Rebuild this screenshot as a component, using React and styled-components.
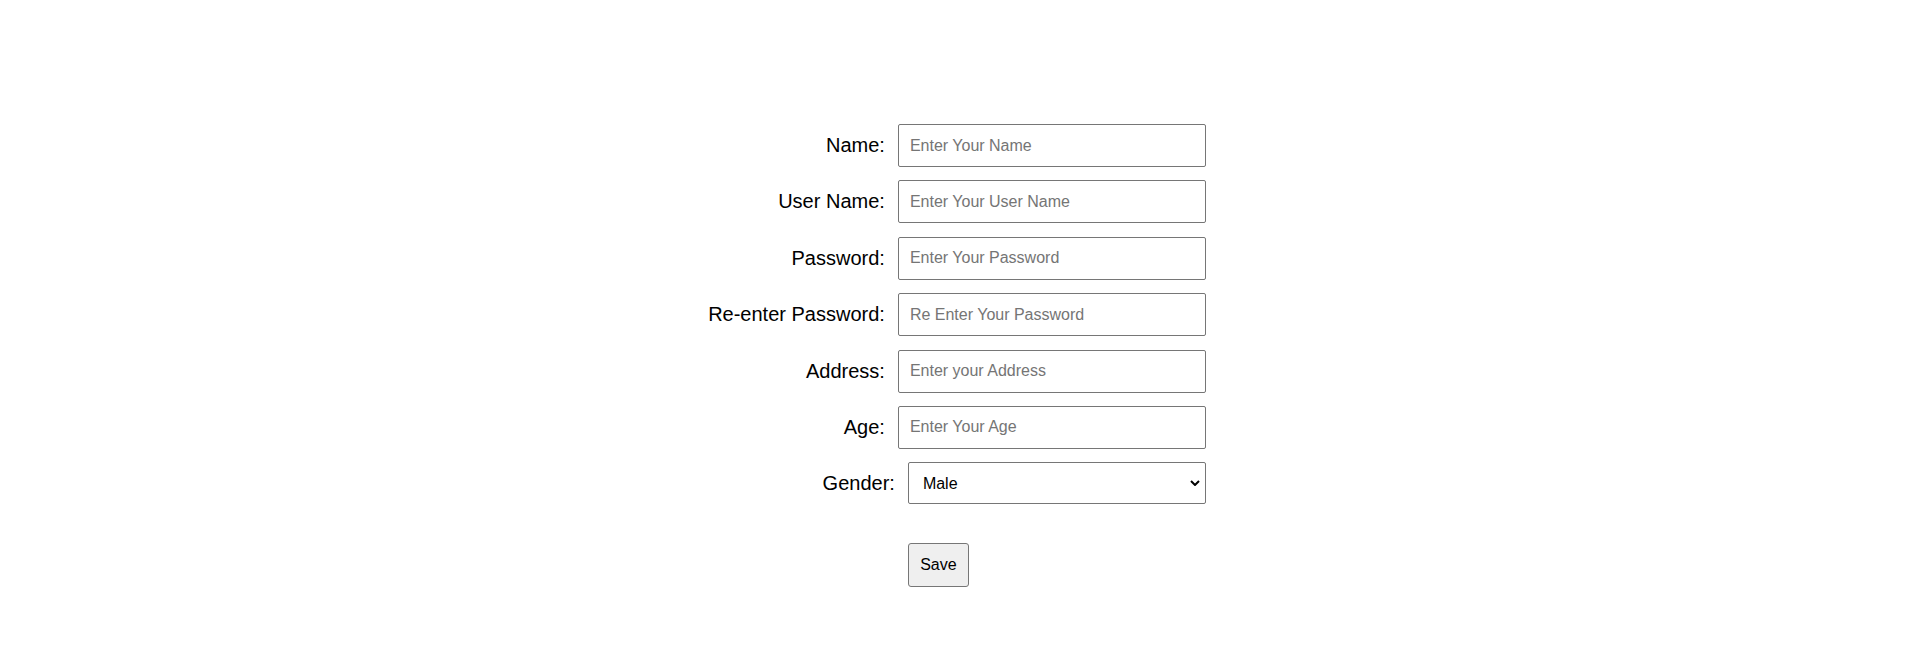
import React, { useState } from "react";
import styled, { createGlobalStyle } from "styled-components";

const GlobalStyle = createGlobalStyle`
    body {
        margin: 0;
        background: #ffffff;
        font-family: "Liberation Sans", Arial, sans-serif;
    }
`;

const fields = [
    { label: "Name:", name: "name", type: "text", placeholder: "Enter Your Name" },
    { label: "User Name:", name: "username", type: "text", placeholder: "Enter Your User Name" },
    { label: "Password:", name: "password", type: "password", placeholder: "Enter Your Password" },
    { label: "Re-enter Password:", name: "repassword", type: "password", placeholder: "Re Enter Your Password" },
    { label: "Address:", name: "address", type: "text", placeholder: "Enter your Address" },
    { label: "Age:", name: "age", type: "text", placeholder: "Enter Your Age" },
];

export default function App() {
    const [form, setForm] = useState({ gender: "Male" });

    const handleChange = (e) => {
        setForm({ ...form, [e.target.name]: e.target.value });
    };

    return (
        <>
            <GlobalStyle />
            <Page>
                <Form onSubmit={(e) => e.preventDefault()}>
                    {fields.map((f) => (
                        <React.Fragment key={f.name}>
                            <Label htmlFor={f.name}>{f.label}</Label>
                            <Input
                                id={f.name}
                                name={f.name}
                                type={f.type}
                                placeholder={f.placeholder}
                                value={form[f.name] || ""}
                                onChange={handleChange}
                            />
                        </React.Fragment>
                    ))}
                    <Label htmlFor="gender" $shift>Gender:</Label>
                    <SelectWrap>
                        <Select id="gender" name="gender" value={form.gender} onChange={handleChange}>
                            <option>Male</option>
                            <option>Female</option>
                            <option>Other</option>
                        </Select>
                        <Chevron width="10" height="6" viewBox="0 0 10 6">
                            <polyline points="1,1 5,5 9,1" fill="none" stroke="#000" strokeWidth="2" />
                        </Chevron>
                    </SelectWrap>
                    <span />
                    <SaveButton type="submit">Save</SaveButton>
                </Form>
            </Page>
        </>
    );
}

const Page = styled.div`
    display: flex;
    justify-content: center;
    align-items: flex-start;
    padding: 124px 1px 0 0;
    min-height: 661px;
    box-sizing: border-box;
`;

const Form = styled.form`
    display: grid;
    grid-template-columns: auto 308px;
    column-gap: 13px;
    row-gap: 13.4px;
    align-items: center;
`;

const Label = styled.label`
    justify-self: end;
    font-size: 20px;
    color: #000000;
    margin-right: ${({ $shift }) => ($shift ? "-10px" : "0")};
`;

const Input = styled.input`
    box-sizing: border-box;
    width: 308px;
    height: 43px;
    padding: 0 11px;
    font-family: "Liberation Sans", Arial, sans-serif;
    font-size: 16px;
    color: #000000;
    border: 1px solid #767676;
    border-radius: 2px;
    outline: none;

    &::placeholder {
        color: #757575;
    }
`;

const SelectWrap = styled.div`
    position: relative;
    margin-left: 10px;
    width: 298px;
    height: 42px;
`;

const Select = styled.select`
    appearance: none;
    box-sizing: border-box;
    width: 100%;
    height: 100%;
    padding: 0 30px 0 14px;
    font-family: "Liberation Sans", Arial, sans-serif;
    font-size: 16px;
    color: #000000;
    background: #ffffff;
    border: 1px solid #767676;
    border-radius: 2px;
    outline: none;
`;

const Chevron = styled.svg`
    position: absolute;
    right: 6px;
    top: 18px;
    pointer-events: none;
`;

const SaveButton = styled.button`
    justify-self: start;
    box-sizing: border-box;
    width: 61px;
    height: 44px;
    margin-left: 10px;
    margin-top: 25px;
    padding: 0;
    font-family: "Liberation Sans", Arial, sans-serif;
    font-size: 16px;
    color: #000000;
    background: #efefef;
    border: 1px solid #767676;
    border-radius: 3px;
    cursor: pointer;
`;
